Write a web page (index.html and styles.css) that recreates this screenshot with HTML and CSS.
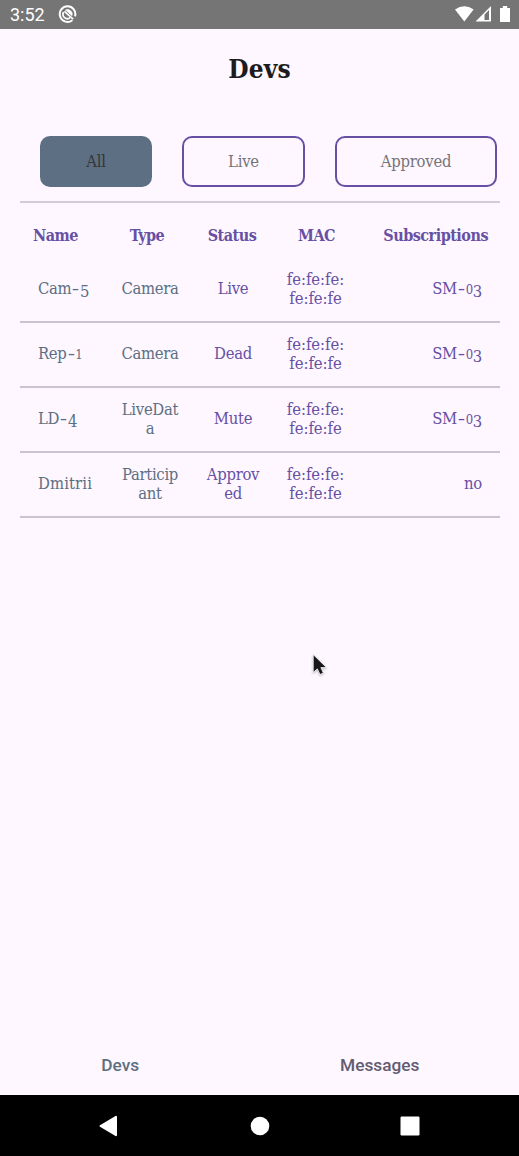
FILE: index.html
```html
<!DOCTYPE html>
<html lang="en">
<head>
<meta charset="utf-8">
<title>Devs</title>
<link rel="stylesheet" href="styles.css">
</head>
<body>
<div class="status">
  <span class="clock">3:52</span>
  <svg class="app" width="20" height="20" viewBox="0 0 20 20" fill="none" stroke="#fff"><path d="M14.4 16.2A7.8 7.8 0 1 1 17 12.4" stroke-width="2"/><path d="M12.2 13.6A4.4 4.4 0 0 1 5.6 8" stroke-width="1.7"/><path d="M7.4 6.2A4.6 4.6 0 0 1 14 11.6L8.2 6.6z" fill="#fff" stroke-width=".8"/><path d="M6.4 7.4l8.8 7.8" stroke-width="1.6"/></svg>
  <svg class="signals" width="58" height="18" viewBox="0 0 58 18" fill="#fff"><path d="M0 3.5Q9.3-2.8 18.6 3.5L9.3 15.5z"/><path fill-rule="evenodd" d="M20.5 15.5L36 0v15.5zM29.5 8.5v5.6H34V4z"/><path d="M45 2h2.8V0h4.4v2H55v14H45z"/></svg>
</div>
<main>
  <h1>Devs</h1>
  <div class="filters"><button class="on">All</button><button class="live">Live</button><button class="approved">Approved</button></div>
  <div class="table">
    <div class="row head"><b class="name">Name</b><b class="type">Type</b><b class="stat">Status</b><b class="mac">MAC</b><b class="subs">Subscriptions</b></div>
    <div class="row"><span class="name">Cam<i class="dash">-</i><i class="low">5</i></span><span class="type">Camera</span><span class="stat">Live</span><span class="mac">fe:fe:fe:<br>fe:fe:fe</span><span class="subs">SM<i class="dash">-</i><i class="mid">0</i><i class="low">3</i></span></div>
    <div class="row"><span class="name">Rep<i class="dash">-</i><i class="mid">1</i></span><span class="type">Camera</span><span class="stat">Dead</span><span class="mac">fe:fe:fe:<br>fe:fe:fe</span><span class="subs">SM<i class="dash">-</i><i class="mid">0</i><i class="low">3</i></span></div>
    <div class="row"><span class="name">LD<i class="dash">-</i><i class="low">4</i></span><span class="type">LiveDat<br>a</span><span class="stat">Mute</span><span class="mac">fe:fe:fe:<br>fe:fe:fe</span><span class="subs">SM<i class="dash">-</i><i class="mid">0</i><i class="low">3</i></span></div>
    <div class="row"><span class="name dmitrii">Dmitrii</span><span class="type">Particip<br>ant</span><span class="stat">Approv<br>ed</span><span class="mac">fe:fe:fe:<br>fe:fe:fe</span><span class="subs">no</span></div>
  </div>
</main>
<svg class="cursor" width="18" height="26" viewBox="0 0 18 26"><path d="M1.2 1.5v18l4.1-3.6 2.7 5.6 3.4-1.5-2.5-5.4h5.6z" fill="#17171b" stroke="#fff" stroke-width=".8"/></svg>
<div class="tabs"><span class="active">Devs</span><span>Messages</span></div>
<nav>
  <svg width="20" height="22" viewBox="0 0 20 22"><path d="M1.5 11L17 1.8v18.4z" fill="#fff" stroke="#fff" stroke-width="2" stroke-linejoin="round"/></svg>
  <svg width="20" height="20" viewBox="0 0 20 20"><circle cx="10" cy="10" r="9.3" fill="#fff"/></svg>
  <svg width="20" height="20" viewBox="0 0 20 20"><rect x=".5" y=".5" width="19" height="19" rx="1.2" fill="#fff"/></svg>
</nav>
</body>
</html>
```
FILE: styles.css
```css
* { box-sizing: border-box; }
body { margin: 0; height: 1156px; display: flex; flex-direction: column; background: #fef7ff; font-family: "DejaVu Serif Condensed", "DejaVu Serif", serif; font-stretch: condensed; overflow: hidden; }
.status { height: 29px; background: #757575; display: flex; align-items: center; padding: 0 6px 0 10px; color: #fff; font: 18px Roboto, sans-serif; }
.clock { width: 48px; }
.app { margin-top: -2px; }
.signals { margin: 1px 0 0 auto; }
main { flex: 1; padding: 0 20px; }
h1 { margin: 0; height: 107px; padding-top: 21px; line-height: 38px; font-size: 26px; letter-spacing: .1px; text-align: center; color: #1d1b20; }
.filters { display: flex; gap: 30px; padding: 0 0 14px 20px; }
button { height: 51px; width: 112px; flex: none; padding: 0; border: 2px solid #6750a4; border-radius: 10px; background: none; font-family: inherit; font-stretch: inherit; font-size: 16.5px; letter-spacing: -.25px; color: #757477; }
.on { background: #5d6f82; border-color: #5d6f82; color: #363636; }
.live { width: 123px; }
.approved { width: 162px; }
.table { margin-right: -1px; border-top: 2px solid #d2ccd6; color: #6750a4; font-size: 16.5px; letter-spacing: -.3px; line-height: 19px; }
.row { height: 65px; border-bottom: 2px solid #cac4d0; display: grid; grid-template-columns: 87px 86px 80px 85px 1fr; align-items: center; text-align: center; padding: 0 18px 2px 0; }
.row .name { text-align: left; padding-left: 18px; }
.row .subs { text-align: right; }
.row span.name, .row span.type { color: #5d6f82; }
.row .dmitrii { letter-spacing: .1px; }
.row .mac { letter-spacing: -.05px; }
.head { height: 55px; border: 0; padding: 10px 12px 0 0; font-size: 16px; letter-spacing: -.5px; }
.row.head .name { padding-left: 13px; }
.head .type { margin-left: -6px; }
.head .stat { margin-left: -2px; }
.row.head .mac { margin-left: 2px; letter-spacing: -.5px; }
.head .subs { white-space: nowrap; }
i { font-style: normal; line-height: 0; }
.dash { display: inline-block; transform: scaleX(1.5); margin: 0 2px; }
.low { vertical-align: -3px; }
.mid { font-size: 13px; font-stretch: normal; }
.cursor { position: absolute; left: 312px; top: 653px; filter: drop-shadow(0 1px 1px #0004); }
.tabs { height: 60px; display: grid; grid-template-columns: 1fr 1fr; line-height: 60px; text-align: center; font-family: Roboto, sans-serif; font-stretch: normal; font-size: 17.3px; font-weight: 500; color: #625b71; }
.tabs span { padding-right: 19px; }
.tabs .active { color: #5d6f82; }
nav { height: 61px; background: #000; display: flex; align-items: center; justify-content: space-between; padding: 0 99px; }
```
